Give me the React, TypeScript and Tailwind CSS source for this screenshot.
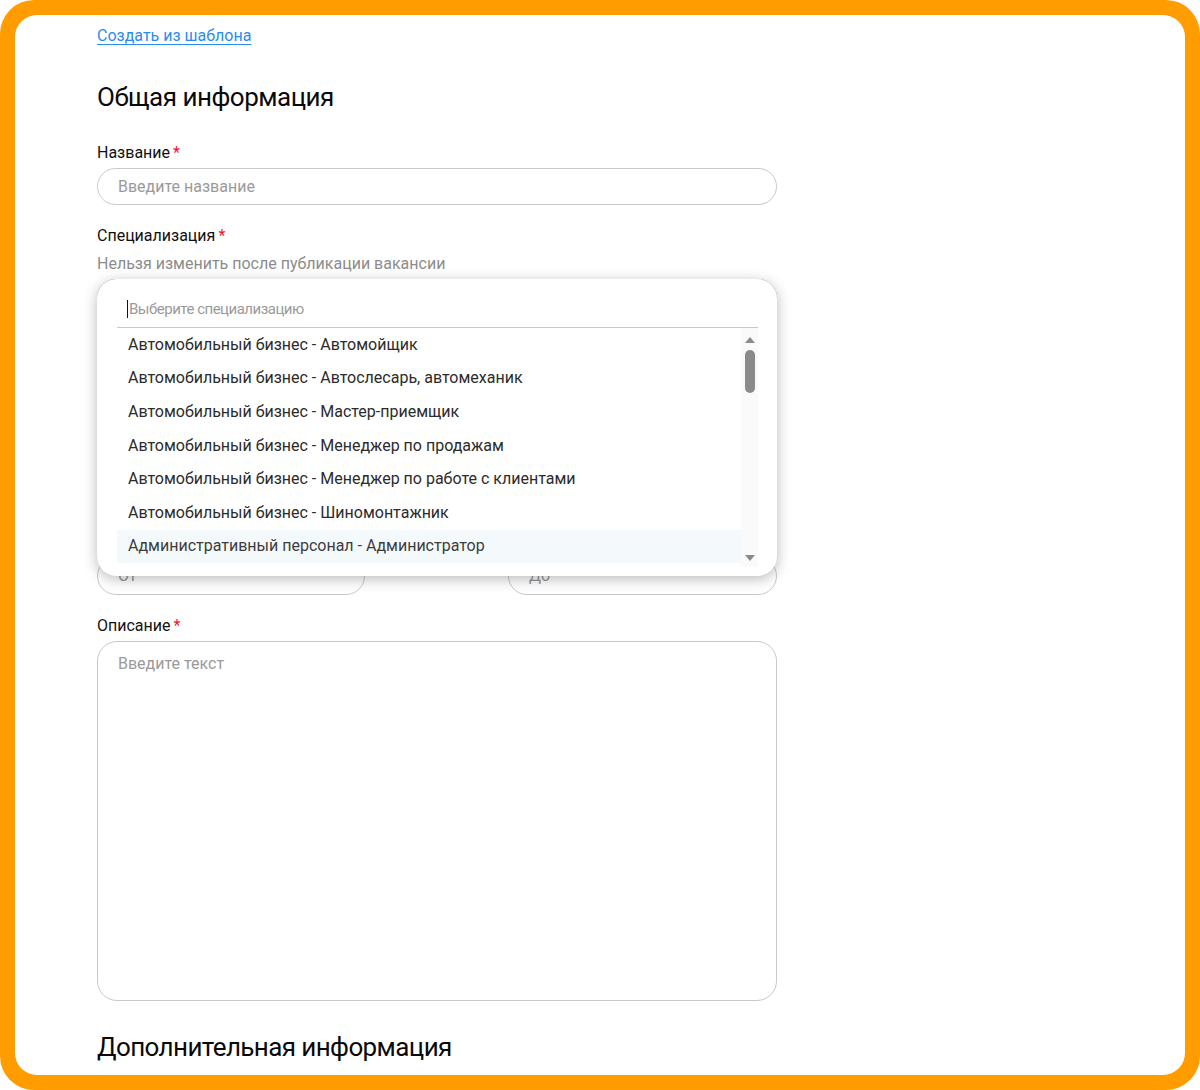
import React from "react";

const font = { fontFamily: "Roboto, 'Noto Sans', sans-serif" };

const items = [
  "Автомобильный бизнес - Автомойщик",
  "Автомобильный бизнес - Автослесарь, автомеханик",
  "Автомобильный бизнес - Мастер-приемщик",
  "Автомобильный бизнес - Менеджер по продажам",
  "Автомобильный бизнес - Менеджер по работе с клиентами",
  "Автомобильный бизнес - Шиномонтажник",
  "Административный персонал - Администратор",
];

function Label({ children, required }: { children: React.ReactNode; required?: boolean }) {
  return (
    <div className="text-[16px] leading-[20px] text-[#111]">
      {children}
      {required && <span className="ml-[3px] text-[#f0142f]">*</span>}
    </div>
  );
}

function Input({ placeholder, className = "" }: { placeholder?: string; className?: string }) {
  return (
    <div
      className={`h-[37px] rounded-full border border-[#c9c9c9] bg-white px-[20px] flex items-center text-[16px] text-[#9a9a9a] ${className}`}
    >
      {placeholder}
    </div>
  );
}

function SpecialtyDropdown() {
  return (
    <div className="absolute left-0 top-0 z-10 w-[680px] h-[297px] rounded-[20px] bg-white shadow-[0_3px_14px_rgba(0,0,0,0.28)] pl-[20px] pr-[19px] pt-[12px]">
      <div className="h-[37px] border-b border-[#c8c8c8] flex items-center pl-[10px] text-[15px] text-[#9a9a9a] tracking-[-0.5px]">
        <span className="inline-block w-[1px] h-[18px] bg-[#111] mr-[1px]" />
        Выберите специализацию
      </div>
      <div className="flex h-[239px]">
        <div className="flex-1 overflow-hidden">
          {items.map((t, i) => (
            <div
              key={t}
              className={`h-[33.6px] flex items-center pl-[11px] text-[16px] text-[#2b2b2b] ${
                i === items.length - 1 ? "bg-[#f4f9fc] text-[#3d3d3d]" : ""
              }`}
            >
              {t}
            </div>
          ))}
        </div>
        <div className="w-[17px] bg-[#fafafa] flex flex-col items-center pt-[9px] pb-[6px]">
          <svg width="10" height="6" viewBox="0 0 10 6">
            <polygon points="0,6 5,0 10,6" fill="#8a8a8a" />
          </svg>
          <div className="mt-[7px] w-[10px] h-[43px] rounded-full bg-[#8a8a8a]" />
          <div className="flex-1" />
          <svg width="10" height="6" viewBox="0 0 10 6">
            <polygon points="0,0 10,0 5,6" fill="#8a8a8a" />
          </svg>
        </div>
      </div>
    </div>
  );
}

export default function App() {
  return (
    <div className="w-[1200px] h-[1090px] bg-white" style={font}>
      <div className="h-full rounded-[34px] bg-[#ff9c00] p-[15px]">
        <div className="h-full rounded-[22px] bg-white overflow-hidden pl-[82px]">
          <div className="w-[680px]">
            <div className="pt-[9px]">
              <a className="text-[16px] leading-[24px] text-[#2b8cf0] underline decoration-[#2b8cf0] underline-offset-[3px]">
                Создать из шаблона
              </a>
            </div>
            <h2 className="mt-[33px] text-[26px] leading-[32px] text-[#0a0a0a] tracking-[-0.5px]">
              Общая информация
            </h2>

            <div className="mt-[30px]">
              <Label required>Название</Label>
              <Input placeholder="Введите название" className="mt-[5px]" />
            </div>

            <div className="mt-[21px]">
              <Label required>Специализация</Label>
              <div className="mt-[8px] text-[16px] leading-[20px] text-[#8c8c8c]">
                Нельзя изменить после публикации вакансии
              </div>
              <div className="relative mt-[5px]">
                <SpecialtyDropdown />
                {/* fields covered by the open list */}
                <Input />
                <div className="mt-[21px] h-[20px]" />
                <Input className="mt-[5px]" />
                <div className="mt-[21px] h-[20px]" />
                <Input className="mt-[5px]" />
                <div className="mt-[21px] h-[20px]" />
                <div className="mt-[34px] flex justify-between">
                  <Input placeholder="От" className="w-[268px] h-[38px]" />
                  <Input placeholder="До" className="w-[269px] h-[38px]" />
                </div>
              </div>
            </div>

            <div className="mt-[21px]">
              <Label required>Описание</Label>
              <div className="mt-[5px] h-[360px] rounded-[20px] border border-[#c9c9c9] px-[20px] pt-[12px] text-[16px] leading-[20px] text-[#9a9a9a]">
                Введите текст
              </div>
            </div>

            <h2 className="mt-[30px] text-[26px] leading-[32px] text-[#0a0a0a] tracking-[-0.6px]">
              Дополнительная информация
            </h2>
          </div>
        </div>
      </div>
    </div>
  );
}
